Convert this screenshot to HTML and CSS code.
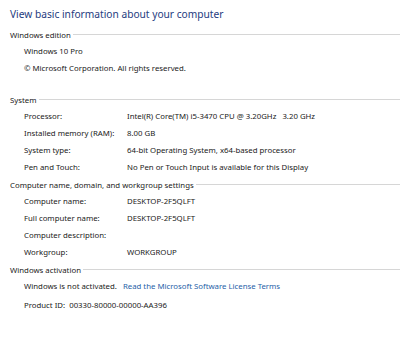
FILE: index.html
```html
<!DOCTYPE html>
<html>
<head>
    <link rel="stylesheet" href="styles.css">
</head>
<body>
    <div id="page">
        <h1 class="title">View basic information about your computer</h1>

        <div class="section edition">
            <div class="section-head"><span>Windows edition</span></div>
            <p class="line">Windows 10 Pro</p>
            <p class="line">© Microsoft Corporation. All rights reserved.</p>
        </div>

        <div class="section system">
            <div class="section-head"><span>System</span></div>
            <div class="rows">
                <span class="label">Processor:</span>
                <span class="value">Intel(R) Core(TM) i5-3470 CPU @ 3.20GHz &nbsp; 3.20 GHz</span>
                <span class="label">Installed memory (RAM):</span>
                <span class="value">8.00 GB</span>
                <span class="label">System type:</span>
                <span class="value">64-bit Operating System, x64-based processor</span>
                <span class="label">Pen and Touch:</span>
                <span class="value">No Pen or Touch Input is available for this Display</span>
            </div>
        </div>

        <div class="section">
            <div class="section-head"><span>Computer name, domain, and workgroup settings</span></div>
            <div class="rows">
                <span class="label">Computer name:</span>
                <span class="value">DESKTOP-2F5QLFT</span>
                <span class="label">Full computer name:</span>
                <span class="value">DESKTOP-2F5QLFT</span>
                <span class="label">Computer description:</span>
                <span class="value"></span>
                <span class="label">Workgroup:</span>
                <span class="value">WORKGROUP</span>
            </div>
        </div>

        <div class="section">
            <div class="section-head"><span>Windows activation</span></div>
            <p class="line">Windows is not activated. <a class="link">Read the Microsoft Software License Terms</a></p>
            <p class="line product">Product ID: &nbsp;00330-80000-00000-AA396</p>
        </div>
    </div>
</body>
</html>
```

FILE: styles.css
```css
body {
    margin: 0;
    background-color: white;
    font-family: 'Noto Sans', 'Open Sans', sans-serif;
    color: #1a1a1a;
    font-size: 7.8px;
}

#page {
    padding: 5px 0 0 10px;
}

.title {
    margin: 0;
    font-size: 10.2px;
    font-weight: normal;
    color: #1e3b80;
    line-height: 18px;
}

.section {
    margin-top: 0;
}

.section.edition {
    margin-top: 3px;
}

.section.system {
    margin-top: 14px;
}

.section-head {
    display: flex;
    align-items: center;
    height: 17px;
}

.section-head::after {
    content: '';
    flex: 1;
    height: 1px;
    background-color: #d6d6d6;
    margin-left: 2px;
}

.line {
    margin: 0;
    padding-left: 14px;
    line-height: 17px;
}

.rows {
    display: grid;
    grid-template-columns: 103px 1fr;
    padding-left: 14px;
    line-height: 17px;
}

.link {
    color: #1f5fa8;
    margin-left: 4px;
}

.product {
    margin-top: 2px;
}
```
